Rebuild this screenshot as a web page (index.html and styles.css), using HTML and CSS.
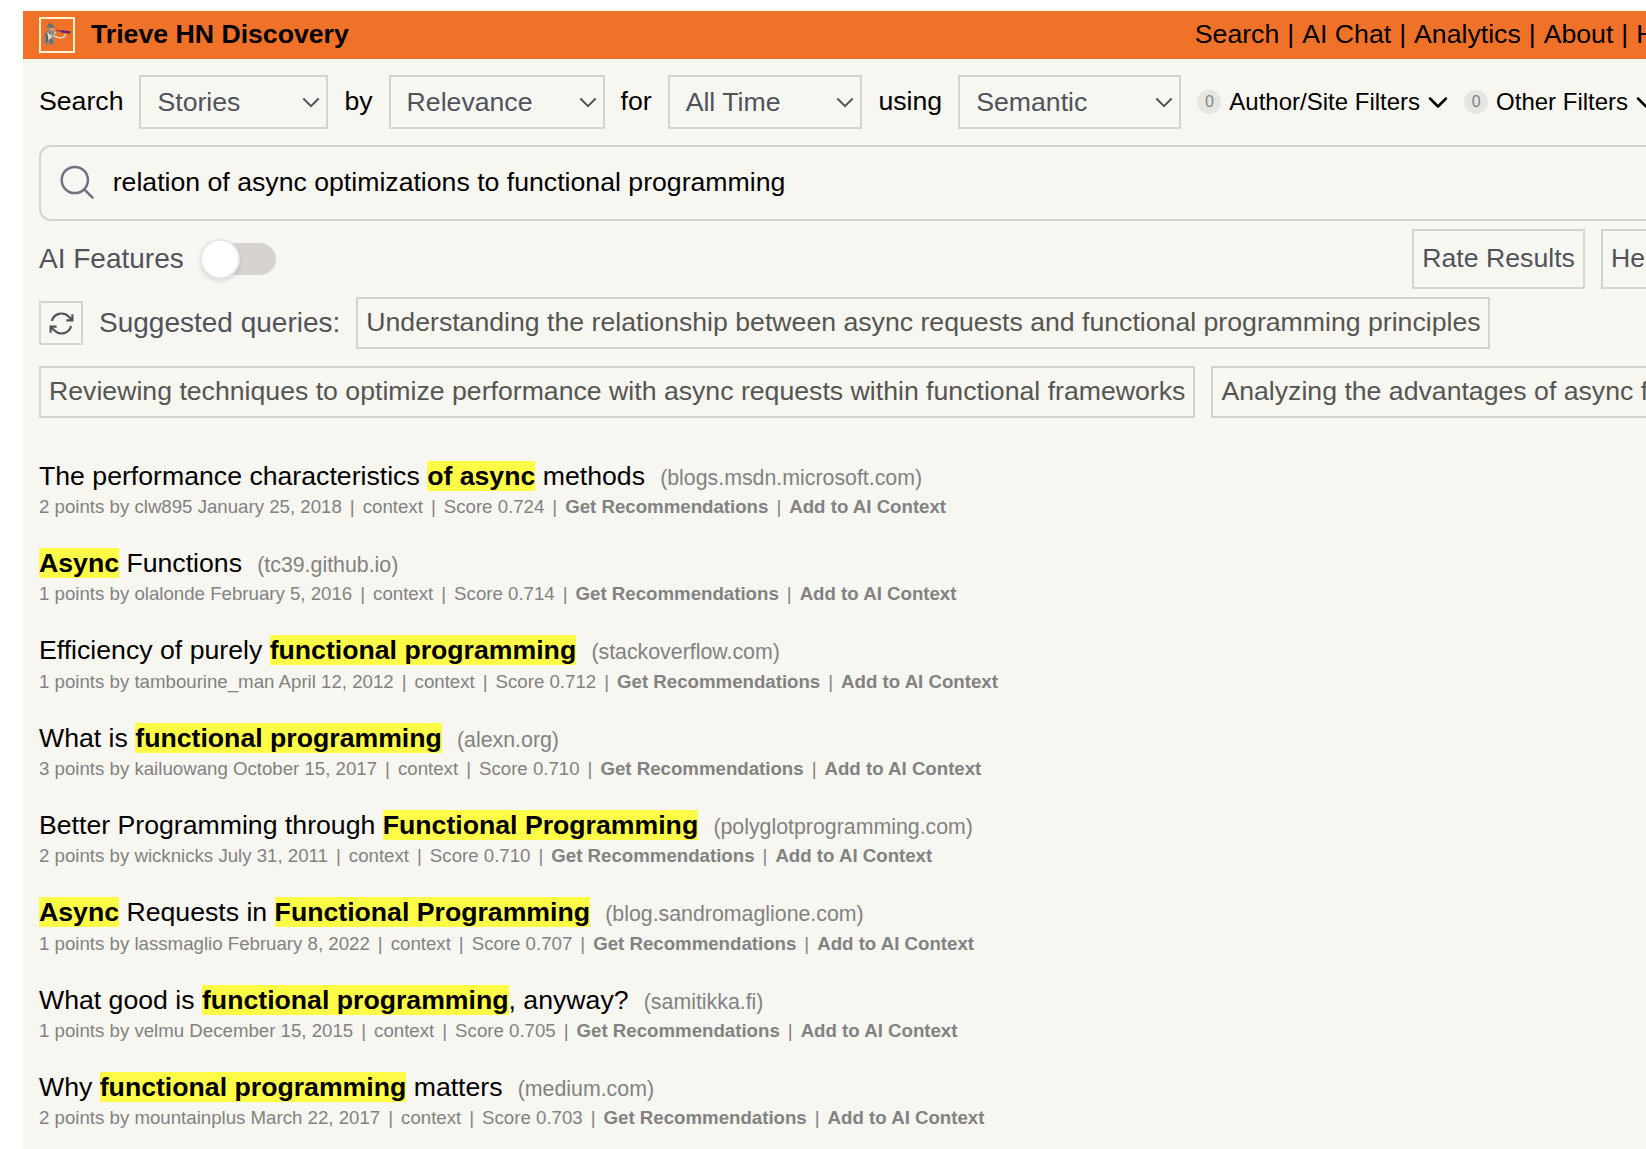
FILE: index.html
```html
<!DOCTYPE html>
<html lang="en">
<head>
<meta charset="utf-8">
<title>Trieve HN Discovery</title>
<link rel="stylesheet" href="styles.css">
</head>
<body>
<div class="page">
  <header class="header">
    <span class="logo">
      <svg width="32" height="32" viewBox="0 0 32 32">
        <path d="M3.500 25l-.5-7 1-4 3-3 4-1 2 3 1 3-1.500 3 1 6-4 1-1-3-1 2.500z" fill="#85847e"/>
        <path d="M4.500 15l2 4-1 4M10 14l-1 5 2 5" fill="none" stroke="#4f4c49" stroke-width="1.200"/>
        <path d="M6.500 13l2.500 3 2-2-.5 5-3 2z" fill="#dcd9d2"/>
        <path d="M7 4.500h4.500l1 3.500H6.500z" fill="#6a6c6a"/>
        <path d="M4 8.200h10" stroke="#77766f" stroke-width="1.400"/>
        <path d="M8.500 9h4.500l.5 3h-4z" fill="#b5a394"/>
        <path d="M12 16.500l6 2.500 5-1 2-3.500M15 12.800l-2 2" fill="none" stroke="#e0cfc6" stroke-width="1.500"/>
        <path d="M15 11.300l6 1" stroke="#8f3a4a" stroke-width="1.300"/>
        <path d="M20 12.300l9.500 1.200" stroke="#6b2468" stroke-width="2.400"/>
      </svg>
    </span>
    <span class="brand">Trieve HN Discovery</span>
    <nav class="nav"><a>Search</a><span>|</span><a>AI Chat</a><span>|</span><a>Analytics</a><span>|</span><a>About</a><span>|</span><a>HN</a></nav>
  </header>
  <main class="content">
    <div class="filters">
      <span>Search</span>
      <div class="select select-type">Stories<svg class="caret" viewBox="0 0 20 12"><path d="M1.500 1.500 10 10l8.500-8.500"/></svg></div>
      <span>by</span>
      <div class="select select-sort">Relevance<svg class="caret" viewBox="0 0 20 12"><path d="M1.500 1.500 10 10l8.500-8.500"/></svg></div>
      <span>for</span>
      <div class="select select-time">All Time<svg class="caret" viewBox="0 0 20 12"><path d="M1.500 1.500 10 10l8.500-8.500"/></svg></div>
      <span>using</span>
      <div class="select select-mode">Semantic<svg class="caret" viewBox="0 0 20 12"><path d="M1.500 1.500 10 10l8.500-8.500"/></svg></div>
      <div class="more"><span class="count">0</span>Author/Site Filters<svg class="chevron" viewBox="0 0 20 20"><path d="M2 6.500l8 8 8-8"/></svg></div>
      <div class="more"><span class="count">0</span>Other Filters<svg class="chevron" viewBox="0 0 20 20"><path d="M2 6.500l8 8 8-8"/></svg></div>
    </div>
    <div class="search">
      <svg class="search-icon" viewBox="0 0 36 36"><circle cx="14.800" cy="16" r="13.100"/><path d="M24.200 25.400 32.500 33.700"/></svg>
      <span>relation of async optimizations to functional programming</span>
    </div>
    <div class="tools">
      <span class="label">AI Features</span>
      <span class="toggle"><span class="knob"></span></span>
      <div class="actions"><button class="action">Rate Results</button><button class="action">Help</button></div>
    </div>
    <div class="suggestions">
      <div class="suggest-row">
        <span class="refresh"><svg viewBox="0 0 24 24"><path d="M16.023 9.348h4.992V4.356M2.985 19.644v-4.992h4.992M2.985 14.652l3.181 3.183a8.250 8.250 0 0 0 13.803-3.700M4.031 9.865a8.250 8.250 0 0 1 13.803-3.700l3.181 3.182"/></svg></span>
        <span class="label">Suggested queries:</span>
        <span class="pill pill-first">Understanding the relationship between async requests and functional programming principles</span>
      </div>
      <div class="suggest-row">
        <span class="pill">Reviewing techniques to optimize performance with async requests within functional frameworks</span>
        <span class="pill">Analyzing the advantages of async functions</span>
      </div>
    </div>
    <div class="results">
      <article class="result"><div class="title"><span>The performance characteristics <mark>of async</mark> methods</span><span class="domain">(blogs.msdn.microsoft.com)</span></div>
        <div class="meta"><span>2 points by clw895 January 25, 2018</span><span>|</span><span>context</span><span>|</span><span>Score 0.724</span><span>|</span><b>Get Recommendations</b><span>|</span><b>Add to AI Context</b></div></article>
      <article class="result"><div class="title"><span><mark>Async</mark> Functions</span><span class="domain">(tc39.github.io)</span></div>
        <div class="meta"><span>1 points by olalonde February 5, 2016</span><span>|</span><span>context</span><span>|</span><span>Score 0.714</span><span>|</span><b>Get Recommendations</b><span>|</span><b>Add to AI Context</b></div></article>
      <article class="result"><div class="title"><span>Efficiency of purely <mark>functional programming</mark></span><span class="domain">(stackoverflow.com)</span></div>
        <div class="meta"><span>1 points by tambourine_man April 12, 2012</span><span>|</span><span>context</span><span>|</span><span>Score 0.712</span><span>|</span><b>Get Recommendations</b><span>|</span><b>Add to AI Context</b></div></article>
      <article class="result"><div class="title"><span>What is <mark>functional programming</mark></span><span class="domain">(alexn.org)</span></div>
        <div class="meta"><span>3 points by kailuowang October 15, 2017</span><span>|</span><span>context</span><span>|</span><span>Score 0.710</span><span>|</span><b>Get Recommendations</b><span>|</span><b>Add to AI Context</b></div></article>
      <article class="result"><div class="title"><span>Better Programming through <mark>Functional Programming</mark></span><span class="domain">(polyglotprogramming.com)</span></div>
        <div class="meta"><span>2 points by wicknicks July 31, 2011</span><span>|</span><span>context</span><span>|</span><span>Score 0.710</span><span>|</span><b>Get Recommendations</b><span>|</span><b>Add to AI Context</b></div></article>
      <article class="result"><div class="title"><span><mark>Async</mark> Requests in <mark>Functional Programming</mark></span><span class="domain">(blog.sandromaglione.com)</span></div>
        <div class="meta"><span>1 points by lassmaglio February 8, 2022</span><span>|</span><span>context</span><span>|</span><span>Score 0.707</span><span>|</span><b>Get Recommendations</b><span>|</span><b>Add to AI Context</b></div></article>
      <article class="result"><div class="title"><span>What good is <mark>functional programming</mark>, anyway?</span><span class="domain">(samitikka.fi)</span></div>
        <div class="meta"><span>1 points by velmu December 15, 2015</span><span>|</span><span>context</span><span>|</span><span>Score 0.705</span><span>|</span><b>Get Recommendations</b><span>|</span><b>Add to AI Context</b></div></article>
      <article class="result"><div class="title"><span>Why <mark>functional programming</mark> matters</span><span class="domain">(medium.com)</span></div>
        <div class="meta"><span>2 points by mountainplus March 22, 2017</span><span>|</span><span>context</span><span>|</span><span>Score 0.703</span><span>|</span><b>Get Recommendations</b><span>|</span><b>Add to AI Context</b></div></article>
    </div>
  </main>
</div>
</body>
</html>
```

FILE: styles.css
```css
* { box-sizing: border-box; }
body {
  margin: 0;
  height: 1149px;
  overflow: hidden;
  background: #fff;
  color: #000;
  font-family: "Liberation Sans", Arial, sans-serif;
  font-size: 26.67px;
  white-space: nowrap;
}
.page {
  margin: 11px 0 0 23px;
  height: 1138px;
  background: #f7f6f1;
  overflow: hidden;
}
.header {
  display: flex;
  align-items: center;
  gap: 16px;
  height: 48px;
  padding-left: 16px;
  background: #f07128;
}
.logo {
  display: flex;
  flex: none;
  width: 36px;
  height: 36px;
  border: 2px solid #fbf3cf;
}
.brand { font-weight: bold; line-height: 46px; padding-bottom: 2px; }
.nav {
  display: flex;
  gap: 8px;
  width: 451.200px;
  margin-left: auto;
  overflow: hidden;
  padding-bottom: 2px;
}
.content { padding: 16px 0 0 16px; }
.filters {
  display: flex;
  align-items: center;
  gap: 16px;
  height: 54px;
}
.filters > span { padding-bottom: 2px; }
.select {
  display: flex;
  flex: none;
  align-items: center;
  justify-content: space-between;
  height: 54px;
  padding: 0 6px 0 16px;
  border: 2px solid #d3d3cf;
  background: #f7f7f2;
  color: #52525b;
}
.select-type { width: 188.950px; }
.select-sort { width: 216px; }
.select-time { width: 194.800px; }
.select-mode { width: 223.150px; }
.caret {
  width: 18px;
  height: 11px;
  fill: none;
  stroke: #52525b;
  stroke-width: 2.200;
}
.more {
  display: flex;
  flex: none;
  align-items: center;
  gap: 8px;
  font-size: 24px;
}
.count {
  width: 24px;
  height: 24px;
  border-radius: 50%;
  background: #e6e5e2;
  color: #828282;
  font-size: 16px;
  line-height: 23px;
  text-align: center;
}
.chevron {
  width: 20px;
  height: 20px;
  fill: none;
  stroke: #000;
  stroke-width: 2.500;
  stroke-linecap: round;
  stroke-linejoin: round;
}
.search {
  display: flex;
  align-items: center;
  gap: 17px;
  height: 76px;
  margin: 16px -20px 0 0;
  padding: 0 0 2px 18.700px;
  border: 2px solid #d3d3cf;
  border-radius: 12px;
}
.search-icon {
  width: 36px;
  height: 36px;
  fill: none;
  stroke: #6b7280;
  stroke-width: 2.500;
  stroke-linecap: round;
}
.label { color: #52525b; font-size: 28px; }
.tools {
  display: flex;
  align-items: center;
  height: 60px;
  margin-top: 8px;
}
.toggle {
  display: flex;
  align-items: center;
  width: 72px;
  height: 32px;
  margin-left: 20px;
  border-radius: 16px;
  background: #d6d3d1;
}
.knob {
  flex: none;
  width: 40px;
  height: 40px;
  margin-left: -4px;
  border: 2px solid #e5e7eb;
  border-radius: 50%;
  background: #fff;
  box-shadow: 0 2px 4px rgba(0, 0, 0, 0.12);
}
.actions {
  display: flex;
  gap: 16px;
  width: 234px;
  margin-left: auto;
  overflow: hidden;
}
.action {
  flex: none;
  height: 60px;
  padding: 0 7.700px 2px 8.300px;
  border: 2px solid #d3d3cf;
  background: #f7f7f2;
  color: #52525b;
  font: inherit;
}
.suggestions {
  display: grid;
  gap: 17px;
  margin-top: 8px;
}
.suggest-row {
  display: flex;
  align-items: center;
  gap: 16px;
  height: 52px;
  overflow: hidden;
}
.refresh {
  display: flex;
  flex: none;
  align-items: center;
  justify-content: center;
  width: 44px;
  height: 44px;
  border: 2px solid #d3d3cf;
}
.refresh svg {
  width: 29px;
  height: 29px;
  fill: none;
  stroke: #52525b;
  stroke-width: 1.800;
}
.pill {
  flex: none;
  height: 52px;
  padding: 0 8px;
  border: 2px solid #d3d3cf;
  color: #555552;
  line-height: 46px;
}
.pill-first { padding-right: 7px; }
.results { padding-top: 39.750px; }
.result { height: 87.330px; }
.title {
  display: flex;
  align-items: baseline;
  gap: 15.200px;
  height: 35.250px;
  line-height: 36px;
}
mark {
  background: #fffc48;
  color: #000;
  font-weight: bold;
}
.domain { color: #828282; font-size: 21.330px; }
.meta {
  display: flex;
  gap: 8px;
  color: #828282;
  font-size: 18.670px;
  line-height: 28px;
}
```
